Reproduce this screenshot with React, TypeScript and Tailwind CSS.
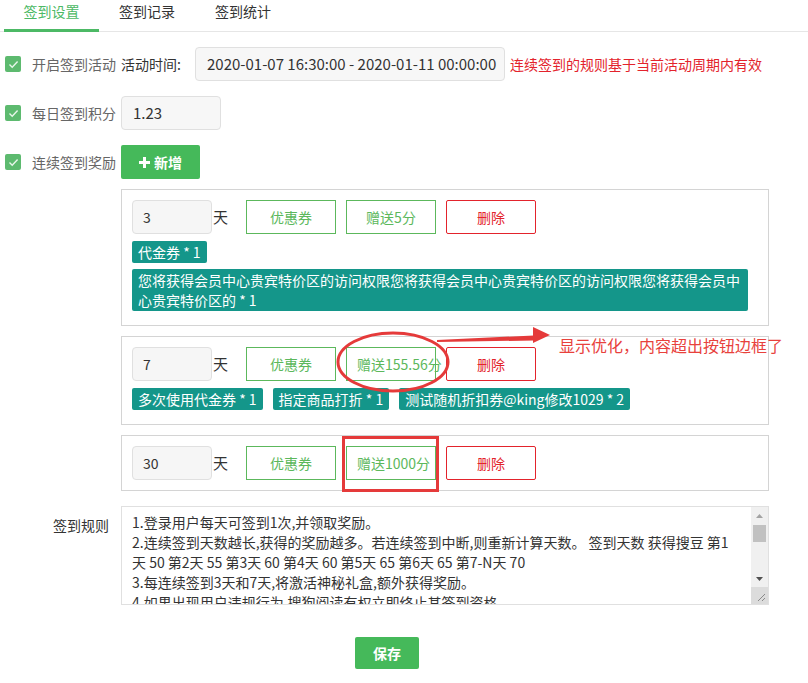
import React from "react";

const FONT = { fontFamily: '"Noto Sans CJK SC", "Noto Sans", sans-serif' };

const RULES = [
  "1.登录用户每天可签到1次,并领取奖励。",
  "2.连续签到天数越长,获得的奖励越多。若连续签到中断,则重新计算天数。 签到天数 获得搜豆 第1",
  "天 50 第2天 55 第3天 60 第4天 60 第5天 65 第6天 65 第7-N天 70",
  "3.每连续签到3天和7天,将激活神秘礼盒,额外获得奖励。",
  "4.如果出现用户违规行为,搜狗阅读有权立即终止其签到资格。",
  "5.签到所得积分可在积分商城兑换礼品。",
  "6.奖励将在签到后即时发放至账户。",
].join("\n");

type Reward = {
  days: string;
  points: string;
  tags: string[];
};

const REWARDS: Reward[] = [
  {
    days: "3",
    points: "赠送5分",
    tags: [
      "代金券 * 1",
      "您将获得会员中心贵宾特价区的访问权限您将获得会员中心贵宾特价区的访问权限您将获得会员中心贵宾特价区的 * 1",
    ],
  },
  {
    days: "7",
    points: "赠送155.56分",
    tags: ["多次使用代金券 * 1", "指定商品打折 * 1", "测试随机折扣券@king修改1029 * 2"],
  },
  { days: "30", points: "赠送1000分", tags: [] },
];

function Check() {
  return (
    <span className="flex h-4 w-4 items-center justify-center rounded-[2px] bg-[#5dba6f]">
      <svg width="11" height="9" viewBox="0 0 11 9" fill="none">
        <path d="M1.5 4.6 L4.2 7.2 L9.6 1.6" stroke="#e8f6ea" strokeWidth="1.4" />
      </svg>
    </span>
  );
}

function CheckLabel({ text }: { text: string }) {
  return (
    <div className="flex w-[121px] shrink-0 items-center pl-[5px]">
      <Check />
      <span className="ml-[11px] text-[14px] leading-[20px] text-[#666]">{text}</span>
    </div>
  );
}

function RewardCard({ reward }: { reward: Reward }) {
  const hasTags = reward.tags.length > 0;
  return (
    <div
      className={`border border-[#d4d4d4] px-[10px] pt-[10px] ${hasTags ? "pb-[14px]" : "pb-[10px]"}`}
    >
      <div className="flex items-center">
        <div className="h-[34px] w-[80px] rounded-[4px] border border-[#e0e0e0] bg-[#f6f6f6] pl-[10px] text-[14px] leading-[32px] text-[#333]">
          {reward.days}
        </div>
        <span className="ml-px w-[20px] text-[15px] text-[#333]">天</span>
        <button className="ml-[13px] h-[34px] w-[90px] border border-[#5cb85c] text-[14px] text-[#5cb85c]">
          优惠券
        </button>
        <button className="ml-[10px] h-[34px] w-[90px] whitespace-nowrap border border-[#5cb85c] px-[10px] text-left text-[14px] leading-[32px] text-[#5cb85c]">
          <span className="inline-block min-w-full text-center">{reward.points}</span>
        </button>
        <button className="ml-[10px] h-[34px] w-[90px] rounded-[2px] border border-[#e3232c] text-[14px] text-[#e3232c]">
          删除
        </button>
      </div>
      {hasTags && (
        <div className="mt-[7px] flex flex-wrap gap-x-[10px] gap-y-[6px]">
          {reward.tags.map((t) => (
            <span
              key={t}
              className="max-w-[616px] rounded-[2px] bg-[#14968a] px-[6px] py-px text-[14px] leading-[20px] text-white"
            >
              {t}
            </span>
          ))}
        </div>
      )}
    </div>
  );
}

// classic windows-style vertical scrollbar next to the rules box
function ScrollBar() {
  return (
    <div className="flex w-[17px] shrink-0 flex-col bg-[#f0f0f0]">
      <div className="flex h-[17px] items-center justify-center">
        <svg width="7" height="4" viewBox="0 0 7 4">
          <path d="M0 4 L3.5 0 L7 4 Z" fill="#a3a3a3" />
        </svg>
      </div>
      <div className="mx-[2px] mt-[1px] h-[17px] bg-[#c1c1c1]" />
      <div className="flex-1" />
      <div className="flex h-[17px] items-center justify-center">
        <svg width="7" height="4" viewBox="0 0 7 4">
          <path d="M0 0 L3.5 4 L7 0 Z" fill="#505050" />
        </svg>
      </div>
      <div className="flex h-[17px] items-end justify-end bg-[#dcdcdc] p-[2px]">
        <svg width="10" height="10" viewBox="0 0 10 10">
          <path d="M9 2 L2 9 M9 6 L6 9" stroke="#8a8a8a" strokeWidth="1" />
        </svg>
      </div>
    </div>
  );
}

export default function App() {
  return (
    <div className="relative h-[683px] w-[808px] overflow-hidden bg-white" style={FONT}>
      {/* tabs */}
      <div className="flex h-[32px] border-b border-[#e6e6e6] pl-[4px] text-[14px]">
        <div className="h-[32px] w-[95px] border-b-[3px] border-[#4cb965] text-center leading-[22px] text-[#4cb965]">
          签到设置
        </div>
        <div className="w-[96px] text-center leading-[22px] text-[#333]">签到记录</div>
        <div className="w-[96px] text-center leading-[22px] text-[#333]">签到统计</div>
      </div>

      <div className="pt-[15px]">
        {/* row 1 */}
        <div className="flex h-[34px] items-center">
          <CheckLabel text="开启签到活动" />
          <span className="w-[74px] shrink-0 text-[14px] text-[#333]">活动时间:</span>
          <div className="h-[34px] w-[310px] shrink-0 rounded-[4px] border border-[#e0e0e0] bg-[#f7f7f7] pl-[11px] text-[15px] leading-[32px] text-[#333]">
            2020-01-07 16:30:00 - 2020-01-11 00:00:00
          </div>
          <span className="ml-[5px] whitespace-nowrap text-[14px] text-[#e3232c]">
            连续签到的规则基于当前活动周期内有效
          </span>
        </div>

        {/* row 2 */}
        <div className="mt-[15px] flex h-[34px] items-center">
          <CheckLabel text="每日签到积分" />
          <div className="h-[34px] w-[100px] rounded-[4px] border border-[#e0e0e0] bg-[#f7f7f7] pl-[11px] text-[15px] leading-[32px] text-[#333]">
            1.23
          </div>
        </div>

        {/* row 3 */}
        <div className="mt-[15px] flex h-[34px] items-center">
          <CheckLabel text="连续签到奖励" />
          <button className="flex h-[34px] w-[79px] items-center justify-center gap-[4px] rounded-[2px] bg-[#45b95a] text-[14px] font-bold text-white">
            <svg width="11" height="11" viewBox="0 0 11 11">
              <rect x="4" y="0" width="3" height="11" fill="white" />
              <rect x="0" y="4" width="11" height="3" fill="white" />
            </svg>
            新增
          </button>
        </div>

        {/* reward cards */}
        <div className="ml-[121px] mt-[10px] flex w-[648px] flex-col gap-[10px]">
          {REWARDS.map((r) => (
            <RewardCard key={r.days} reward={r} />
          ))}
        </div>

        {/* rules */}
        <div className="mt-[15px] flex">
          <div className="w-[121px] shrink-0 pr-[12px] pt-[9px] text-right text-[14px] leading-[20px] text-[#333]">
            签到规则
          </div>
          <div className="flex h-[99px] w-[648px] border border-[#e0e0e0]">
            <textarea
              readOnly
              defaultValue={RULES}
              className="h-full flex-1 resize-none overflow-hidden px-[10px] pt-[5px] text-[14px] leading-[20px] text-[#333] outline-none"
              style={FONT}
            />
            <ScrollBar />
          </div>
        </div>

        {/* save */}
        <div className="mt-[32px] pl-[355px]">
          <button className="h-[32px] w-[64px] rounded-[2px] bg-[#45b95a] text-[14px] font-bold text-white">
            保存
          </button>
        </div>
      </div>

      {/* annotations */}
      <svg className="pointer-events-none absolute left-0 top-0" width="808" height="683">
        <ellipse cx="393" cy="362" rx="55" ry="29" fill="none" stroke="#e53a3a" strokeWidth="3" />
        <path d="M437 341 L533 336.5 L533 339.5 Z" fill="#e53a3a" stroke="#e53a3a" strokeWidth="2" />
        <path d="M533 327 L550 335 L533 343 Z" fill="#e53a3a" />
        <rect x="343.5" y="437.5" width="94" height="53" fill="none" stroke="#e53a3a" strokeWidth="3" />
      </svg>
      <div className="pointer-events-none absolute left-[559px] top-[333px] whitespace-nowrap text-[16px] leading-[24px] text-[#e8413c]">
        显示优化，内容超出按钮边框了
      </div>
    </div>
  );
}
